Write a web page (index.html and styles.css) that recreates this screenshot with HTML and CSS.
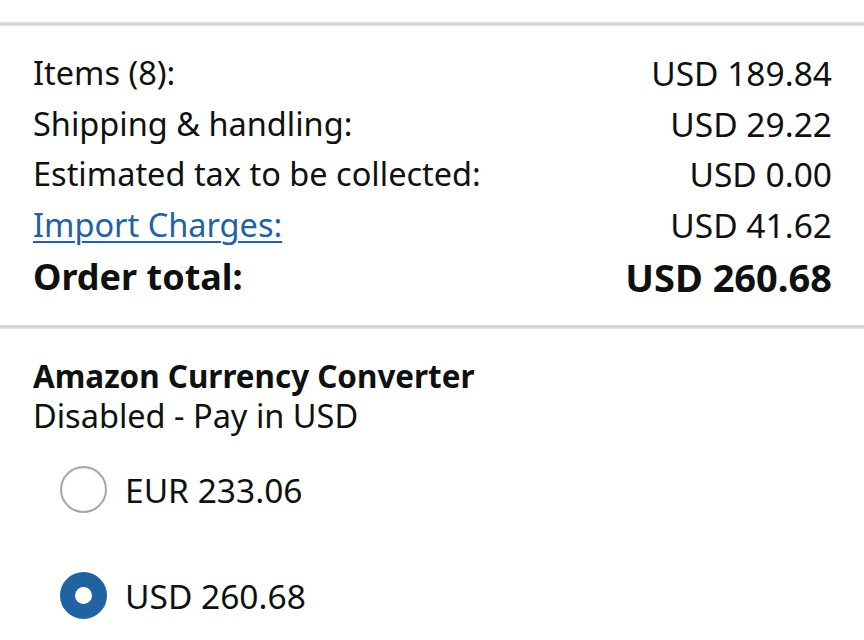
FILE: index.html
```html
<!DOCTYPE html>
<html lang="en">
<head>
<meta charset="utf-8">
<title>Order summary</title>
<link rel="stylesheet" href="styles.css">
</head>
<body>
  <div class="divider divider-top"></div>
  <section class="summary">
    <div class="row"><span>Items (8):</span><span class="amount">USD 189.84</span></div>
    <div class="row"><span>Shipping &amp; handling:</span><span class="amount">USD 29.22</span></div>
    <div class="row"><span>Estimated tax to be collected:</span><span class="amount">USD 0.00</span></div>
    <div class="row"><a class="link" href="#">Import Charges:</a><span class="amount">USD 41.62</span></div>
    <div class="row total"><span>Order total:</span><span class="amount">USD 260.68</span></div>
  </section>
  <div class="divider"></div>
  <section class="converter">
    <h2 class="conv-title">Amazon Currency Converter</h2>
    <p class="conv-sub">Disabled - Pay in USD</p>
    <ul class="options">
      <li class="option"><span class="radio"></span><span class="amount">EUR 233.06</span></li>
      <li class="option"><span class="radio checked"></span><span class="amount">USD 260.68</span></li>
    </ul>
  </section>
</body>
</html>
```
FILE: styles.css
```css
html, body {
  margin: 0;
  padding: 0;
  background: #fff;
}

body {
  width: 864px;
  height: 640px;
  overflow: hidden;
  font-family: "Noto Sans", "Open Sans", sans-serif;
  color: #0f1111;
  font-size: 32.5px;
}

.amount {
  font-size: 33.5px;
}

.divider {
  height: 4px;
  background: linear-gradient(#e3e3e3, #d0d0d0 50%, #e8e8e8);
}

.divider-top {
  margin-top: 22px;
}

.summary {
  padding: 22px 32px 22px 33px;
}

.row {
  display: flex;
  justify-content: space-between;
  align-items: center;
  height: 50.5px;
  line-height: 50px;
}

.link {
  color: #2162a1;
  text-decoration: underline;
  text-underline-offset: 4px;
  text-decoration-thickness: 2px;
}

.total {
  font-weight: 700;
  font-size: 36px;
  padding-top: 2px;
}

.total .amount {
  font-size: 38px;
}

.converter {
  padding: 27px 32px 0 33px;
}

.conv-title {
  margin: 0;
  font-size: 31.4px;
  font-weight: 700;
  line-height: 40px;
}

.conv-sub {
  margin: 0;
  line-height: 40px;
}

.options {
  list-style: none;
  margin: 30px 0 0;
  padding: 0 0 0 27px;
}

.option {
  display: flex;
  align-items: center;
  gap: 18px;
  height: 48px;
  margin-bottom: 58px;
}

.option:last-child {
  margin-bottom: 0;
}

.radio {
  box-sizing: border-box;
  width: 47px;
  height: 47px;
  border-radius: 50%;
  border: 2px solid #a6a6a6;
  background: #fff;
  box-shadow: inset 0 1px 2px rgba(0,0,0,0.08);
}

.radio.checked {
  border: 15px solid #2162a1;
  box-shadow: none;
}
```
